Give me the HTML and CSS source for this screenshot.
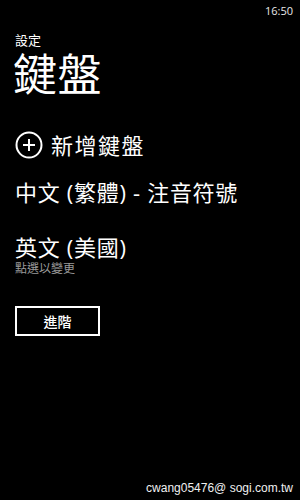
FILE: index.html
```html
<!DOCTYPE html>
<html lang="zh-Hant">
<head>
<meta charset="utf-8">
<link rel="stylesheet" href="styles.css">
</head>
<body>
<div class="phone">
  <div class="status">16:50</div>
  <div class="app-title">設定</div>
  <div class="page-title">鍵盤</div>
  <div class="add-row">
    <svg class="add-icon" width="28" height="28" viewBox="0 0 28 28">
      <circle cx="14" cy="14" r="12.5" fill="none" stroke="#fff" stroke-width="2"/>
      <path d="M14 8v12M8 14h12" stroke="#fff" stroke-width="2"/>
    </svg>
    <span class="add-label">新增鍵盤</span>
  </div>
  <div class="item first">中文 (繁體) - 注音符號</div>
  <div class="item second">英文 (美國)</div>
  <div class="item-sub">點選以變更</div>
  <div class="btn">進階</div>
  <div class="watermark">cwang05476@ sogi.com.tw</div>
</div>
</body>
</html>
```
FILE: styles.css
```css
html, body {
  margin: 0;
  padding: 0;
  background: #000;
}
.phone {
  position: relative;
  width: 300px;
  height: 500px;
  background: #000;
  color: #fff;
  font-family: "Open Sans", "Noto Sans CJK TC", sans-serif;
  overflow: hidden;
}
.status {
  height: 21px;
  line-height: 21px;
  font-size: 11px;
  text-align: right;
  padding-right: 7px;
  color: #e8e8e8;
}
.app-title {
  margin: 9px 0 0 15px;
  font-size: 13px;
  line-height: 20px;
}
.page-title {
  margin: 2px 0 0 13px;
  font-size: 44px;
  line-height: 44px;
  letter-spacing: 0.5px;
}
.add-row {
  display: flex;
  align-items: center;
  gap: 8px;
  margin: 34px 0 0 15px;
  height: 30px;
}
.add-icon {
  display: block;
}
.add-label {
  font-size: 22px;
  line-height: 30px;
  letter-spacing: 1.5px;
}
.item {
  margin-left: 15px;
  font-size: 22px;
  line-height: 30px;
  letter-spacing: 0.7px;
}
.item.first {
  margin-top: 17px;
}
.item.second {
  margin-top: 25px;
}
.item-sub {
  margin-left: 15px;
  font-size: 12px;
  line-height: 14px;
  color: #9a9a9a;
}
.btn {
  box-sizing: border-box;
  margin: 30px 0 0 15px;
  width: 85px;
  height: 30px;
  border: 2px solid #fff;
  display: flex;
  align-items: center;
  justify-content: center;
  font-size: 14px;
  font-weight: 500;
}
.watermark {
  position: absolute;
  right: 7px;
  bottom: 5px;
  font-family: "Liberation Sans", "Noto Sans CJK TC", sans-serif;
  font-size: 12px;
  color: #f0f0f0;
}
```
